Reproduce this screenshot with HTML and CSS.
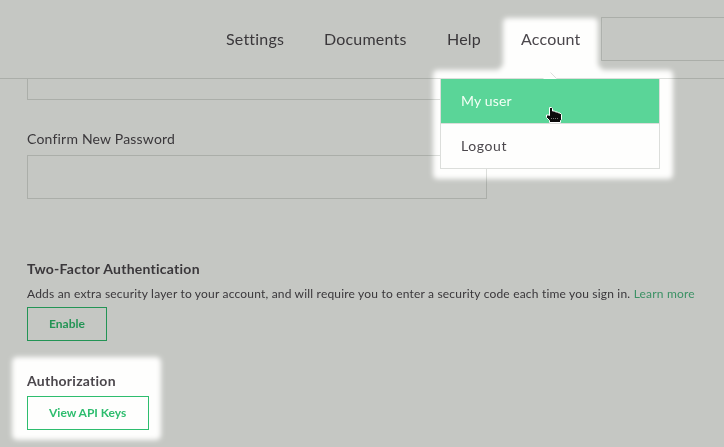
FILE: index.html
```html
<!DOCTYPE html>
<html lang="en">
<head>
<meta charset="utf-8">
<title>Account</title>
<link rel="stylesheet" href="styles.css">
</head>
<body>
<header class="header">
  <nav class="nav">
    <a class="nav-item settings">Settings</a>
    <a class="nav-item documents">Documents</a>
    <a class="nav-item help">Help</a>
    <a class="nav-item account">Account</a>
  </nav>
  <div class="search"></div>
</header>
<main class="content">
  <div class="field field-cut"></div>
  <label class="label">Confirm New Password</label>
  <div class="field"></div>
  <section class="section">
    <h2 class="title title-two">Two-Factor Authentication</h2>
    <p class="text">Adds an extra security layer to your account, and will require you to enter a security code each time you sign in. <a class="link">Learn more</a></p>
    <a class="button enable">Enable</a>
  </section>
  <section class="section auth">
    <h2 class="title title-auth">Authorization</h2>
    <a class="button keys">View API Keys</a>
  </section>
</main>
<div class="menu">
  <svg class="caret" width="16" height="9" viewBox="0 0 16 9"><path d="M1 9 8 2l7 7z" fill="#fefefd"/><path d="M8.500 2.500 14.500 8.500" fill="none" stroke="#d9dbd9" stroke-width=".9"/></svg>
  <a class="menu-item active">My user</a>
  <a class="menu-item logout">Logout</a>
</div>
<svg class="dim" width="724" height="447" viewBox="0 0 724 447">
  <defs>
    <filter id="soft" x="0" y="0" width="724" height="447" filterUnits="userSpaceOnUse" color-interpolation-filters="sRGB"><feGaussianBlur stdDeviation="2.800"/></filter>
    <mask id="spots" maskUnits="userSpaceOnUse" x="0" y="0" width="724" height="447">
      <rect width="724" height="447" fill="#fff"/>
      <g filter="url(#soft)" fill="#000">
        <path d="M508 18h85q5 0 5 5v42l5 5h65q5 0 5 5v99q0 5-5 5H438q-5 0-5-5V75q0-5 5-5h60l5-5V23q0-5 5-5z"/>
        <rect x="12" y="357" width="149" height="83" rx="5"/>
      </g>
    </mask>
  </defs>
  <rect width="724" height="447" fill="#c6c8c5" mask="url(#spots)"/>
</svg>
<svg class="cursor" width="18" height="18" viewBox="0 0 18 18">
  <path d="M4.500 1.500h2l1 1v2.500h2l1 1h2l1 1h1.500l1.500 1.500v5l-1 1v2H4.500v-2l-3-3V9h2.500l.5.500z" fill="#0b0b0b" stroke="#fff"/>
  <path d="M6 12.500h1m1 0h1m1 0h1m1 0h1" stroke="#777"/>
</svg>
</body>
</html>
```
FILE: styles.css
```css
* { box-sizing: border-box; }
body {
  margin: 0;
  width: 724px;
  height: 447px;
  overflow: hidden;
  position: relative;
  background: #fefefd;
  color: #4b474c;
  font-family: Lato, sans-serif;
  font-variant-ligatures: none;
}
.header {
  display: flex;
  height: 79px;
  padding-left: 206px;
  border-bottom: 1px solid #dcdedb;
}
.nav { display: flex; }
.nav-item {
  padding: 0 20px;
  line-height: 77px;
  font-size: 16px;
  letter-spacing: .2px;
  white-space: nowrap;
}
.settings { width: 98px; }
.documents { width: 123px; }
.help { width: 74px; }
.account { width: 100px; }
.search {
  flex: none;
  width: 150px;
  height: 44px;
  margin-top: 17px;
  border: 1px solid #dcdedb;
}
.content { padding-left: 27px; }
.field {
  width: 460px;
  height: 44px;
  border: 1px solid #dcdedb;
}
.field-cut { height: 21px; border-top: 0; }
.label {
  display: block;
  height: 55px;
  padding-top: 29px;
  font-size: 14px;
  line-height: 20px;
  letter-spacing: .2px;
}
.section { padding-top: 60px; }
.title {
  margin: 0;
  font-size: 14px;
  line-height: 20px;
  font-weight: 700;
  letter-spacing: .25px;
}
.text {
  margin: 5px 0 3px;
  font-size: 12px;
  line-height: 20px;
  letter-spacing: .19px;
  white-space: nowrap;
}
.link { color: #4db982; }
.button {
  display: block;
  height: 34px;
  border: 1px solid #2dbd6e;
  color: #2dbd6e;
  font-size: 12px;
  line-height: 32px;
  font-weight: 700;
  padding-left: 21px;
}
.enable { width: 80px; }
.keys { width: 122px; margin-top: 5px; }
.auth { padding-top: 30px; }
.menu {
  position: absolute;
  left: 440px;
  top: 78px;
  width: 220px;
  height: 91px;
  border: 1px solid #dcdedb;
  background: #fefefd;
}
.caret { position: absolute; left: 101px; top: -9px; }
.menu-item {
  display: block;
  height: 44px;
  padding-left: 20px;
  font-size: 14px;
  line-height: 43px;
}
.active { height: 45px; background: #5ad598; color: #f3fff5; border-bottom: 1px solid #dcdedb; letter-spacing: .15px; }
.logout { letter-spacing: .6px; }
.dim { position: absolute; left: 0; top: 0; mix-blend-mode: multiply; }
.cursor { position: absolute; left: 545px; top: 106px; }
```
